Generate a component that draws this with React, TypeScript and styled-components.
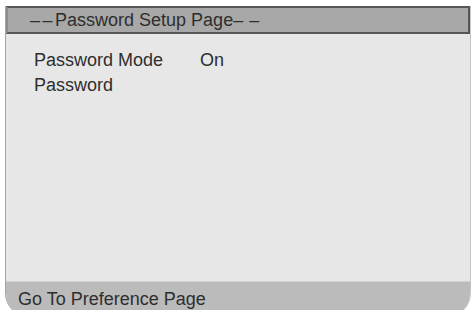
import React from "react";
import styled, { createGlobalStyle } from "styled-components";

const Global = createGlobalStyle`
  html, body { margin: 0; padding: 0; background: #ffffff; }
  body { width: 471px; height: 310px; overflow: hidden; }
`;

const Frame = styled.div`
  margin: 6px 0 0 5px;
  width: 464px;
  height: 311px;
  display: flex;
  flex-direction: column;
  font-family: "Liberation Sans", Arial, sans-serif;
  font-size: 18px;
  color: #2e2e2e;
  border-left: 1px solid #a4a4a4;
  border-right: 1px solid #c6c6c6;
  border-radius: 0 0 24px 24px;
  overflow: hidden;
  background: #e7e7e7;
`;

const Header = styled.div`
  height: 28px;
  box-sizing: border-box;
  background: #a8a8a8;
  border: 2px solid #565656;
  border-left-color: #8c8c8c;
  display: flex;
  align-items: center;
  padding-left: 22px;
  line-height: 20px;
  white-space: pre;
`;

const Dashes = styled.span<{ $gap: number }>`
  letter-spacing: ${(p) => p.$gap}px;
`;

const Body = styled.div`
  flex: 1;
  padding: 14px 0 0 28px;
  display: flex;
  flex-direction: column;
`;

const Row = styled.div`
  display: flex;
  height: 25px;
  line-height: 25px;
`;

const Label = styled.span`
  width: 166px;
`;

const Footer = styled.div`
  height: 36px;
  box-sizing: border-box;
  background: #bbbbbb;
  border-top: 1px solid #d0d0d0;
  padding: 7px 0 0 12px;
  line-height: 20px;
`;

export default function App() {
  return (
    <>
      <Global />
      <Frame>
        <Header>
          <Dashes $gap={2.5}>––</Dashes>Password Setup Page<Dashes $gap={0.5}>– –</Dashes>
        </Header>
        <Body>
          <Row>
            <Label>Password Mode</Label>
            <span>On</span>
          </Row>
          <Row>
            <Label>Password</Label>
          </Row>
        </Body>
        <Footer>Go To Preference Page</Footer>
      </Frame>
    </>
  );
}
